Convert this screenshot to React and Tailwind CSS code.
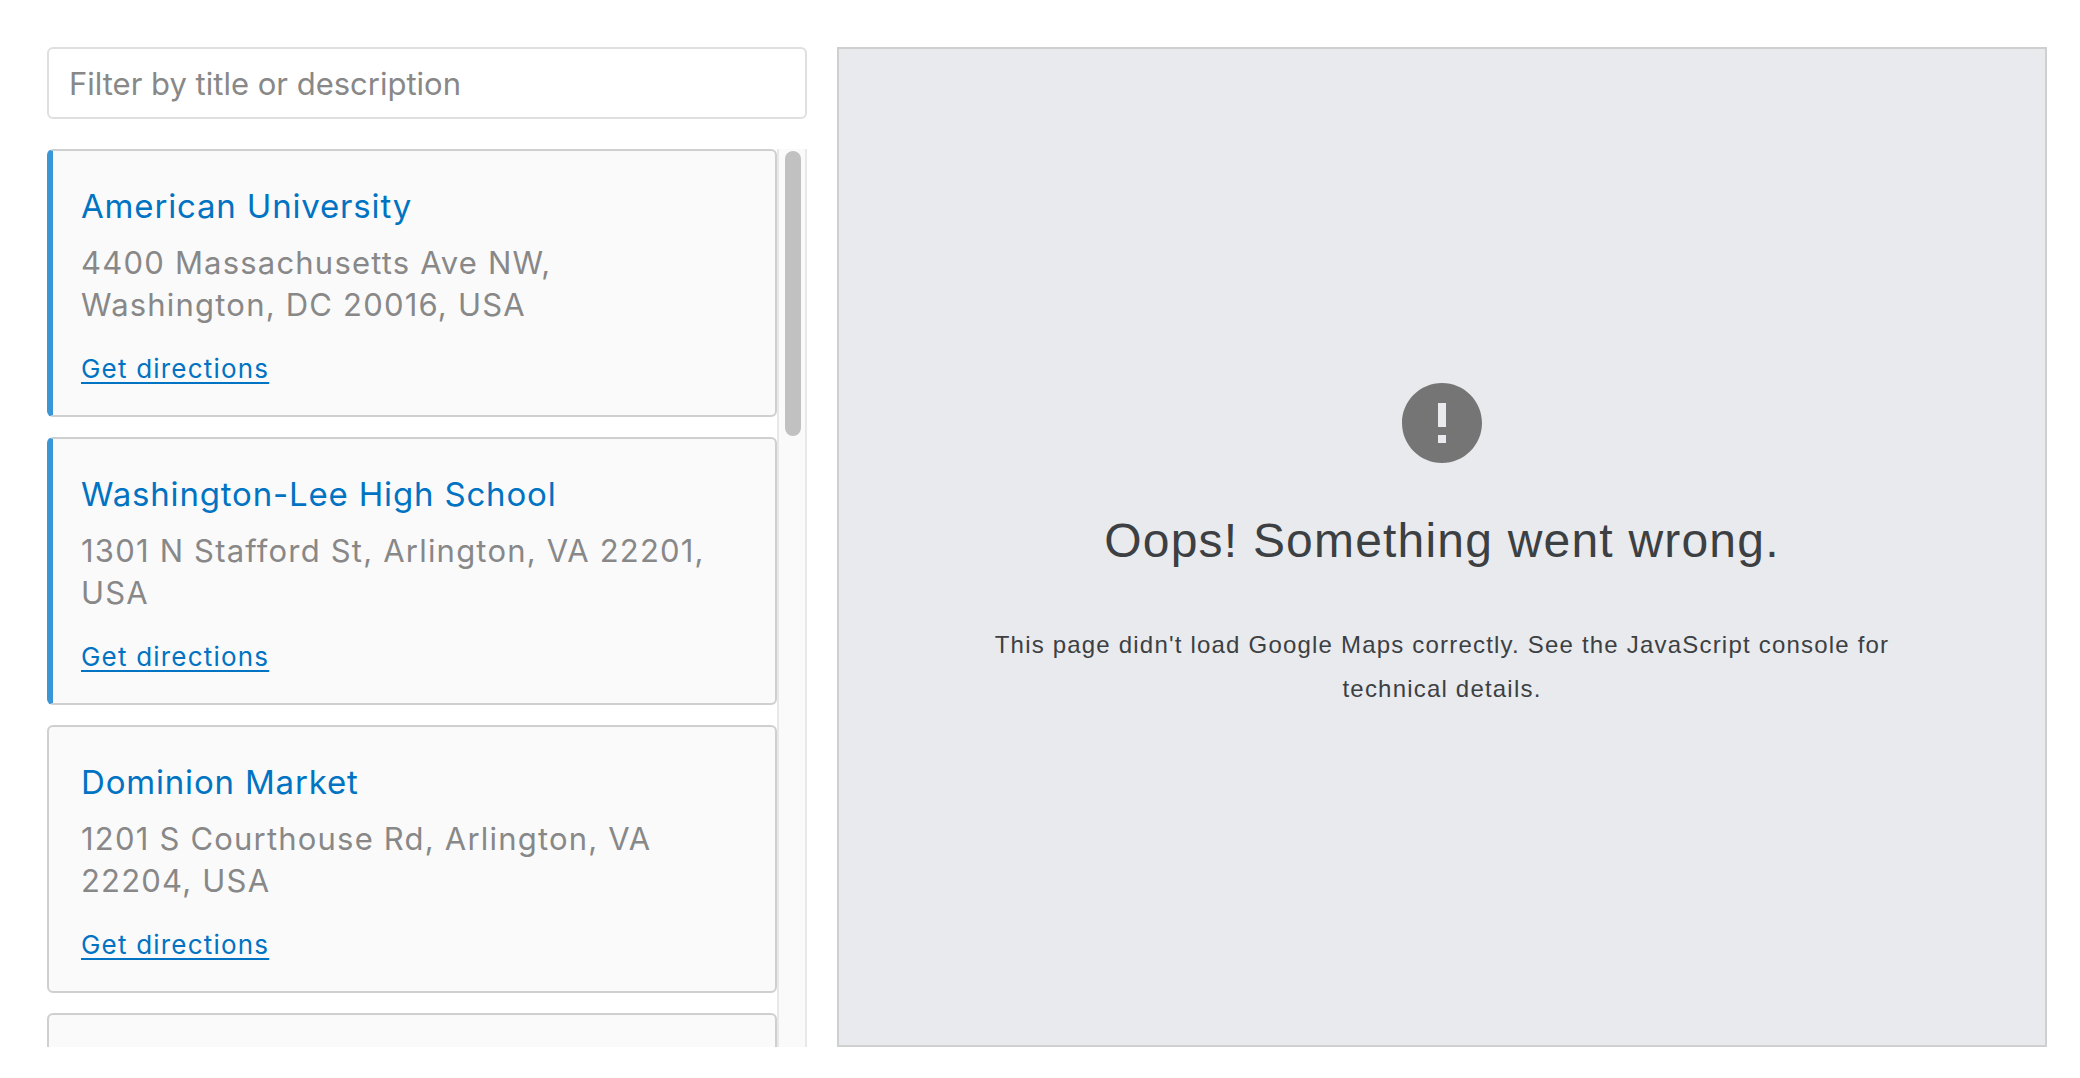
import React, { useState } from 'react';
import { clsx } from 'clsx';

const locations = [
  { name: 'American University', address: '4400 Massachusetts Ave NW, Washington, DC 20016, USA', featured: true },
  { name: 'Washington-Lee High School', address: '1301 N Stafford St, Arlington, VA 22201, USA', featured: true },
  { name: 'Dominion Market', address: '1201 S Courthouse Rd, Arlington, VA 22204, USA', featured: false },
];

const LocationCard = ({ location }) => (
  <li
    className={clsx(
      "shrink-0 rounded-md border-2 border-[#cfcfcf] bg-[#fafafa] pt-[33px] pb-[29px] pr-6",
      location.featured ? "border-l-6 border-l-[#3a96d5] pl-7" : "pl-8"
    )}
  >
    <h2 className="text-[33px] leading-[44px] tracking-wide text-[#0073c2]">{location.name}</h2>
    <p className="mt-[14px] text-[31px] leading-[42px] text-[#888]">{location.address}</p>
    <a
      href="#directions"
      className="mt-[26px] block w-fit text-[26px] leading-[34px] text-[#0073c2] underline decoration-2 underline-offset-4"
    >
      Get directions
    </a>
  </li>
);

const MapError = () => (
  <section className="flex flex-1 flex-col items-center justify-center border-2 border-[#cfcfcf] bg-[#e8eaed] px-[7%] text-center font-['Liberation_Sans',sans-serif] text-[24px] leading-[44px] tracking-wider text-[#3c4043]">
    <svg className="h-20 w-20" viewBox="2 2 20 20" fill="#757575" aria-hidden="true">
      <path d="M12 2C6.48 2 2 6.48 2 12s4.48 10 10 10 10-4.48 10-10S17.52 2 12 2zm1 15h-2v-2h2v2zm0-4h-2V7h2v6z" />
    </svg>
    <h1 className="mt-[50px] text-[48px] leading-[56px]">Oops! Something went wrong.</h1>
    <p className="mt-[54px]">
      This page didn't load Google Maps correctly. See the JavaScript console for technical details.
    </p>
  </section>
);

export default function App() {
  const [query, setQuery] = useState('');
  const term = query.trim().toLowerCase();
  const visible = locations.filter((l) => `${l.name} ${l.address}`.toLowerCase().includes(term));

  return (
    <main className="flex h-screen gap-[30px] bg-white pt-[47px] pr-[33px] pb-[31px] pl-[47px] font-['Inter',sans-serif]">
      <div className="flex w-[38%] flex-col gap-[30px]">
        <input
          type="text"
          aria-label="Filter by title or description"
          placeholder="Filter by title or description"
          value={query}
          onChange={(e) => setQuery(e.target.value)}
          className="h-[72px] w-full shrink-0 rounded-md border-2 border-[#dfdfdf] px-5 text-[31px] text-[#333] outline-none placeholder:text-[#888]"
        />

        <div className="flex min-h-0 flex-1">
          <ul className="flex flex-1 flex-col gap-5 overflow-hidden text-[24px] tracking-wider">
            {visible.map((location) => (
              <LocationCard key={location.name} location={location} />
            ))}
            <li className="h-[268px] shrink-0 rounded-md border-2 border-[#cfcfcf] bg-[#fafafa]" />
          </ul>

          {/* Scroll track */}
          <div className="w-[30px] border-x-2 border-[#e8e8e8] bg-[#fafafa] py-0.5 pl-1.5">
            <div className="h-[285px] w-4 rounded-full bg-[#c1c1c1]" />
          </div>
        </div>
      </div>

      <MapError />
    </main>
  );
}
